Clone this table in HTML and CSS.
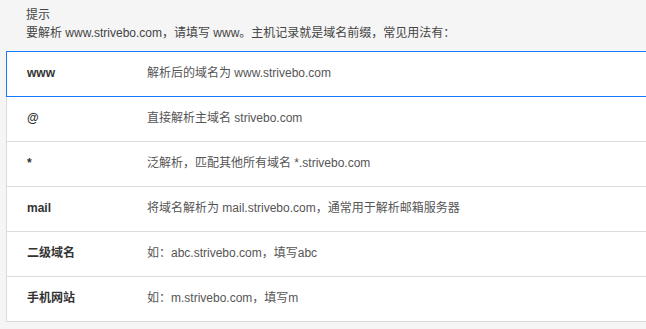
FILE: index.html
```html
<!DOCTYPE html>
<html lang="zh">
<head>
<meta charset="utf-8">
<link rel="stylesheet" href="styles.css">
</head>
<body>
<div class="tip">
  <div class="tip-title">提示</div>
  <div class="tip-text">要解析 www.strivebo.com，请填写 www。主机记录就是域名前缀，常见用法有：</div>
</div>
<div class="list">
  <div class="row active"><span class="key">www</span><span class="desc">解析后的域名为 www.strivebo.com</span></div>
  <div class="row"><span class="key">@</span><span class="desc">直接解析主域名 strivebo.com</span></div>
  <div class="row"><span class="key">*</span><span class="desc">泛解析，匹配其他所有域名 *.strivebo.com</span></div>
  <div class="row"><span class="key">mail</span><span class="desc">将域名解析为 mail.strivebo.com，通常用于解析邮箱服务器</span></div>
  <div class="row"><span class="key">二级域名</span><span class="desc">如：abc.strivebo.com，填写abc</span></div>
  <div class="row"><span class="key">手机网站</span><span class="desc">如：m.strivebo.com，填写m</span></div>
</div>
</body>
</html>
```

FILE: styles.css
```css
html, body {
  margin: 0;
  padding: 0;
  background: #f5f5f5;
  overflow: hidden;
}
body {
  font-family: "Liberation Sans", "Noto Sans CJK SC", sans-serif;
  font-size: 12px;
  color: #555;
}
.tip {
  padding: 6px 0 0 26px;
  line-height: 18px;
  color: #444;
}
.list {
  margin: 9px -6px 0 6px;
  background: #fff;
}
.row {
  display: grid;
  grid-template-columns: 120px 1fr;
  align-items: center;
  height: 42px;
  padding: 0 0 2px 20px;
  line-height: 16px;
  border: 1px solid #dcdcdc;
  margin-top: -1px;
  background: #fff;
}
.row:first-child {
  margin-top: 0;
}
.row.active {
  position: relative;
  z-index: 1;
  border-color: #1677ff;
}
.key {
  font-weight: bold;
  color: #333;
}
.desc {
  color: #555;
}
```
